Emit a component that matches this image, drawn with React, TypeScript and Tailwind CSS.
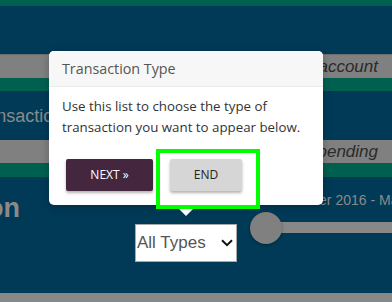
import React from "react";

export default function App() {
  return (
    <div className="relative w-[392px] h-[302px] overflow-hidden bg-[#003a57] font-['Liberation_Sans',Arial,sans-serif]">
      {/* background page */}
      <div className="h-[6px] bg-[#006050]" />
      <div className="h-[48px]" />
      <div className="h-[24px] bg-[#808080] border-t border-[#6e6e6e] flex justify-end items-center pr-[14px]">
        <span className="italic text-[17px] leading-[23px] text-[#2a2a2a]">Select account</span>
      </div>
      <div className="h-[13px] bg-[#006050]" />
      <div className="h-[49px] pt-[15px]">
        <div className="-ml-[30px] text-[18px] leading-[20px] text-[#8a8a8a] whitespace-nowrap">Transaction Search</div>
      </div>
      <div className="h-[23px] bg-[#808080] flex justify-end items-center pr-[14px]">
        <span className="italic text-[17px] leading-[23px] text-[#2a2a2a]">Spending</span>
      </div>
      <div className="h-[14px] bg-[#006050]" />
      <div className="h-[116px] flex items-start">
        <div className="w-[20px] shrink-0 flex justify-end mt-[17px]">
          <span className="text-[27px] leading-[28px] font-bold text-[#8a8a8a] whitespace-nowrap">Transaction</span>
        </div>
        <div className="ml-[115px] flex-1 flex flex-col">
          <div className="pt-[15px] pl-[2px] text-[14px] leading-[16px] text-[#8a8a8a] whitespace-nowrap">
            Minimum date span: November 2016 - March 2017
          </div>
          <div className="mt-[4px] flex items-start gap-[13px]">
            <div className="mt-[12px] w-[102px] h-[38px] shrink-0 bg-white border border-[#a9a9a9] flex items-center justify-between pl-[1px] pr-[3px]">
              <span className="text-[17px] text-[#555] whitespace-nowrap">All Types</span>
              <svg width="12" height="8" viewBox="0 0 12 8" className="shrink-0">
                <path d="M1 1.2 L6 6.2 L11 1.2" fill="none" stroke="#111" strokeWidth="2" />
              </svg>
            </div>
            <div className="relative flex-1 h-[32px]">
              <div className="ml-[16px] mt-[10px] h-[11px] bg-[#888]" />
              <div className="absolute left-0 top-0 w-[32px] h-[32px] rounded-full bg-[#808080] shadow-[0_1px_3px_rgba(0,0,0,0.35)]" />
            </div>
          </div>
        </div>
      </div>
      <div className="h-[9px] bg-[#888]" />

      {/* popover */}
      <div className="absolute left-[49px] top-[51px] w-[274px] h-[154px] bg-white rounded-[5px] shadow-[0_2px_8px_rgba(0,0,0,0.25)] flex flex-col font-['Open_Sans','Noto_Sans',sans-serif]">
        <div className="h-[36px] bg-[#f7f7f7] border-b border-[#ebebeb] rounded-t-[5px] px-[13px] flex items-center text-[14.3px] text-[#555]">
          Transaction Type
        </div>
        <div className="px-[13px] pt-[9px] text-[13.3px] leading-[21px] text-[#333]">
          Use this list to choose the type of transaction you want to appear below.
        </div>
        <div className="mt-[21px] pl-[17px] flex gap-[17px]">
          <div className="w-[87px] h-[32px] rounded-[2px] bg-[#44263e] text-white text-[12px] flex items-center justify-center shadow-[0_2px_3px_rgba(0,0,0,0.3)]">
            NEXT »
          </div>
          <div className="w-[72px] h-[32px] rounded-[2px] bg-[#d6d6d6] text-[#222] text-[12px] flex items-center justify-center shadow-[0_2px_3px_rgba(0,0,0,0.3)]">
            END
          </div>
        </div>
      </div>
      {/* arrow */}
      <div className="absolute left-[179px] top-[209px] w-0 h-0 border-l-[7px] border-r-[7px] border-t-[7px] border-l-transparent border-r-transparent border-t-white" />
      {/* highlight */}
      <div className="absolute left-[156px] top-[149px] w-[104px] h-[60px] border-4 border-[#00ff00]" />
    </div>
  );
}
